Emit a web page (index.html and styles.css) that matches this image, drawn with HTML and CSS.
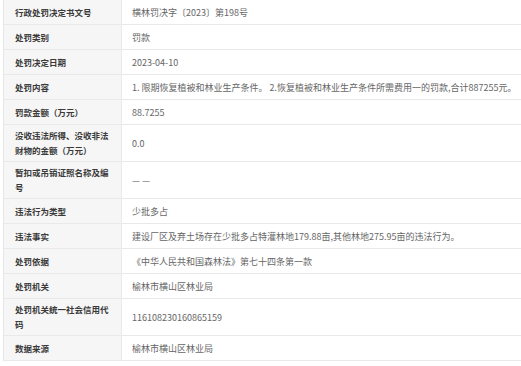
FILE: index.html
```html
<!DOCTYPE html>
<html lang="zh-CN">
<head>
<meta charset="utf-8">
<title>行政处罚</title>
<link rel="stylesheet" href="styles.css">
</head>
<body>
<div class="table">
  <div class="row"><div class="label">行政处罚决定书文号</div><div class="value">横林罚决字〔2023〕第198号</div></div>
  <div class="row"><div class="label">处罚类别</div><div class="value">罚款</div></div>
  <div class="row"><div class="label">处罚决定日期</div><div class="value">2023-04-10</div></div>
  <div class="row"><div class="label">处罚内容</div><div class="value">1. 限期恢复植被和林业生产条件。 2.恢复植被和林业生产条件所需费用一的罚款,合计887255元。</div></div>
  <div class="row"><div class="label">罚款金额（万元）</div><div class="value">88.7255</div></div>
  <div class="row"><div class="label">没收违法所得、没收非法财物的金额（万元）</div><div class="value">0.0</div></div>
  <div class="row"><div class="label">暂扣或吊销证照名称及编号</div><div class="value">— —</div></div>
  <div class="row"><div class="label">违法行为类型</div><div class="value">少批多占</div></div>
  <div class="row"><div class="label">违法事实</div><div class="value">建设厂区及弃土场存在少批多占特灌林地179.88亩,其他林地275.95亩的违法行为。</div></div>
  <div class="row"><div class="label">处罚依据</div><div class="value">《中华人民共和国森林法》第七十四条第一款</div></div>
  <div class="row"><div class="label">处罚机关</div><div class="value">榆林市横山区林业局</div></div>
  <div class="row"><div class="label">处罚机关统一社会信用代码</div><div class="value">116108230160865159</div></div>
  <div class="row"><div class="label">数据来源</div><div class="value">榆林市横山区林业局</div></div>
</div>
</body>
</html>
```

FILE: styles.css
```css
html, body {
  margin: 0;
  padding: 0;
  background: #ffffff;
}
body {
  font-family: "Noto Sans CJK SC", "Noto Sans", sans-serif;
  font-size: 8.5px;
  line-height: 15px;
  overflow: hidden;
}
.table {
  margin-left: 3px;
  border-left: 1px solid #e6e6e6;
  width: 518px;
}
.row {
  display: grid;
  grid-template-columns: 118px 1fr;
  border-bottom: 1px solid #e9e9e9;
}
.label {
  background: #f6f6f6;
  color: #3a3a3a;
  font-weight: bold;
  padding: 3px 10px 3px 11px;
  min-height: 18px;
  display: flex;
  align-items: center;
  border-right: 1px solid #e9e9e9;
}
.value {
  color: #666666;
  font-size: 9px;
  padding: 3px 0 3px 10px;
  display: flex;
  align-items: center;
  white-space: nowrap;
  overflow: hidden;
}
```
